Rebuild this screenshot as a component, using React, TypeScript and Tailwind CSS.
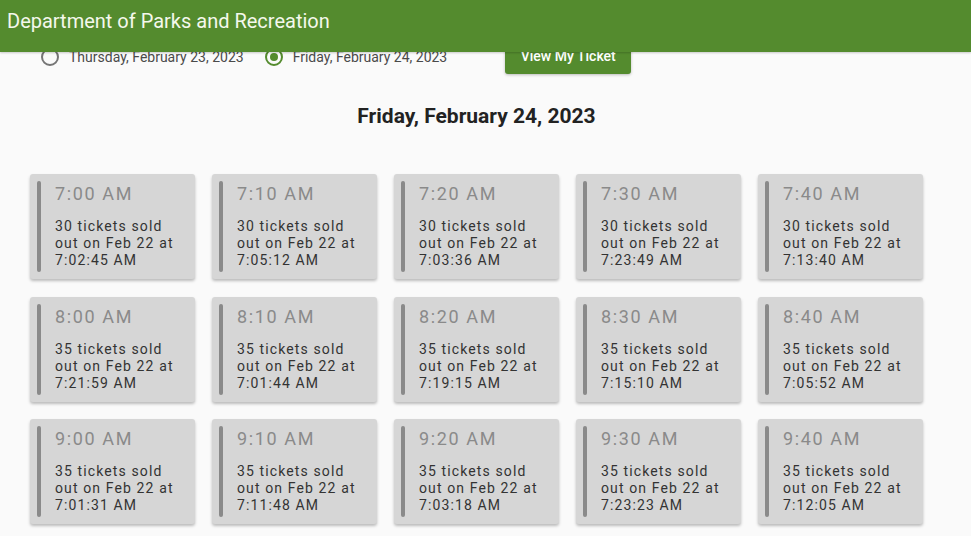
import React from "react";

type Slot = { time: string; count: number; soldAt: string };

const rows: Slot[][] = [
  [
    { time: "7:00 AM", count: 30, soldAt: "7:02:45 AM" },
    { time: "7:10 AM", count: 30, soldAt: "7:05:12 AM" },
    { time: "7:20 AM", count: 30, soldAt: "7:03:36 AM" },
    { time: "7:30 AM", count: 30, soldAt: "7:23:49 AM" },
    { time: "7:40 AM", count: 30, soldAt: "7:13:40 AM" },
  ],
  [
    { time: "8:00 AM", count: 35, soldAt: "7:21:59 AM" },
    { time: "8:10 AM", count: 35, soldAt: "7:01:44 AM" },
    { time: "8:20 AM", count: 35, soldAt: "7:19:15 AM" },
    { time: "8:30 AM", count: 35, soldAt: "7:15:10 AM" },
    { time: "8:40 AM", count: 35, soldAt: "7:05:52 AM" },
  ],
  [
    { time: "9:00 AM", count: 35, soldAt: "7:01:31 AM" },
    { time: "9:10 AM", count: 35, soldAt: "7:11:48 AM" },
    { time: "9:20 AM", count: 35, soldAt: "7:03:18 AM" },
    { time: "9:30 AM", count: 35, soldAt: "7:23:23 AM" },
    { time: "9:40 AM", count: 35, soldAt: "7:12:05 AM" },
  ],
];

function Radio({ checked, label }: { checked: boolean; label: string }) {
  return (
    <label className="flex items-center gap-[10px]">
      <span
        className={
          "flex h-[18px] w-[18px] items-center justify-center rounded-full border-2 " +
          (checked ? "border-[#548b2e]" : "border-[#757575]")
        }
      >
        {checked && <span className="h-[8px] w-[8px] rounded-full bg-[#548b2e]" />}
      </span>
      <span className="text-[14px] text-[#4a4a4a]">{label}</span>
    </label>
  );
}

function SlotCard({ slot }: { slot: Slot }) {
  return (
    <div className="flex h-[105px] gap-[14px] rounded-[3px] bg-[#d6d6d6] p-[7px] shadow-[0_2px_3px_rgba(0,0,0,0.25)]">
      <div className="w-[4px] shrink-0 rounded-[2px] bg-[#8a8a8a]" />
      <div className="pt-[2px]">
        <p className="text-[18px] leading-[22px] tracking-[0.09em] text-[#8a8a8a]">{slot.time}</p>
        <p className="mt-[13px] text-[14px] leading-[17px] tracking-[0.08em] text-[#333]">
          {slot.count} tickets sold
          <br />
          out on Feb 22 at
          <br />
          {slot.soldAt}
        </p>
      </div>
    </div>
  );
}

export default function App() {
  return (
    <div className="relative h-[536px] overflow-hidden bg-[#fafafa] font-['Roboto',sans-serif]">
      <header className="absolute left-0 right-0 top-0 z-10 flex h-[52px] items-start bg-[#548b2e] px-[7px] pt-[6px] shadow-[0_1px_2px_rgba(0,0,0,0.2)]">
        <h1 className="text-[20px] text-[#f4f8ec]">Department of Parks and Recreation</h1>
      </header>

      <main className="pt-[38px]">
        <div className="flex items-center pl-[41px]">
          <div className="flex items-center gap-[21px] pt-[2px]">
            <Radio checked={false} label="Thursday, February 23, 2023" />
            <Radio checked={true} label="Friday, February 24, 2023" />
          </div>
          <button className="ml-[58px] h-[36px] w-[126px] rounded-[3px] bg-[#548b2e] text-[14px] font-medium text-white shadow-[0_1px_3px_rgba(0,0,0,0.25)]">
            View My Ticket
          </button>
        </div>

        <h2 className="mt-[30px] pr-[18px] text-center text-[21px] font-bold leading-[24px] text-[#222]">
          Friday, February 24, 2023
        </h2>

        <div className="ml-[30px] mt-[46px] grid w-[893px] grid-cols-5 gap-x-[17px] gap-y-[17.5px]">
          {rows.flat().map((slot) => (
            <SlotCard key={slot.time} slot={slot} />
          ))}
        </div>
      </main>
    </div>
  );
}
